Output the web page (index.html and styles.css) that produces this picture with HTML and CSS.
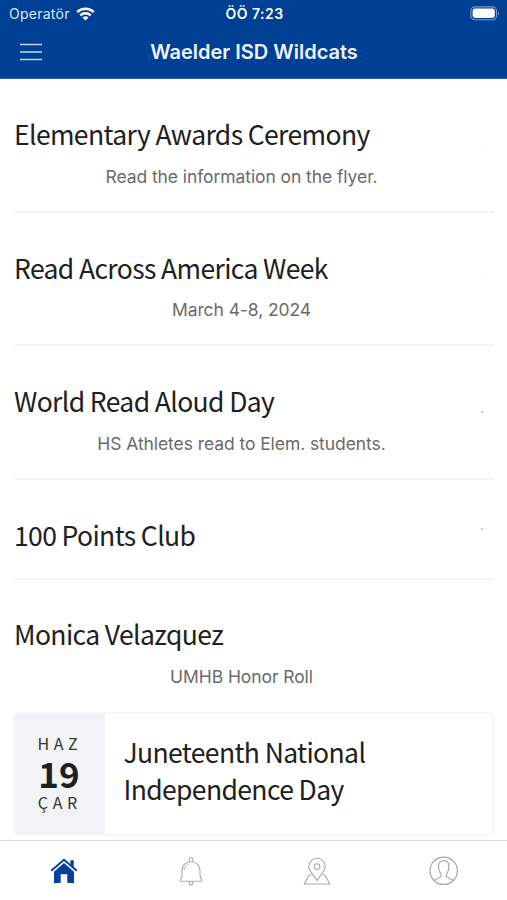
FILE: index.html
```html
<!DOCTYPE html>
<html lang="tr">
<head>
<meta charset="utf-8">
<title>Waelder ISD Wildcats</title>
<link rel="stylesheet" href="styles.css">
</head>
<body>
<div class="app">
  <header class="header">
    <div class="status">
      <div class="carrier"><span>Operatör</span>
        <svg class="wifi" viewBox="0 0 19 14" width="19" height="14"><g fill="none" stroke="#fff" stroke-width="2.5"><path d="M1.2 5.1a11.8 11.8 0 0 1 16.6 0"/><path d="M4.3 8.4a7.4 7.4 0 0 1 10.4 0"/></g><path d="M6.5 10.6a4.3 4.3 0 0 1 6 0L9.5 13.6z" fill="#fff"/></svg>
      </div>
      <span class="clock">ÖÖ 7:23</span>
      <svg class="battery" viewBox="0 0 31 15" width="31" height="15"><rect x=".9" y=".9" width="25.6" height="12.8" rx="4" fill="none" stroke="#7b9dcc" stroke-width="1.1"/><rect x="2.6" y="2.6" width="22.2" height="9.4" rx="2.4" fill="#fff"/><path d="M28 5.2q2.2 2.1 0 4.2z" fill="#7b9dcc"/></svg>
    </div>
    <div class="nav">
      <svg class="menu" viewBox="0 0 22 18" width="22" height="18"><path d="M0 1.5h22M0 9h22M0 16.5h22" stroke="#c2d3ea" stroke-width="1.5"/></svg>
      <h1>Waelder ISD Wildcats</h1>
    </div>
  </header>
  <main class="feed">
    <article class="item"><h2>Elementary Awards Ceremony</h2><i class="dot pale"></i><p>Read the information on the flyer.</p></article>
    <article class="item"><h2>Read Across America Week</h2><i class="dot pale"></i><p>March 4-8, 2024</p></article>
    <article class="item"><h2>World Read Aloud Day</h2><i class="dot"></i><p>HS Athletes read to Elem. students.</p></article>
    <article class="item short"><h2>100 Points Club</h2><i class="dot high"></i></article>
    <article class="item last"><h2>Monica Velazquez</h2><p>UMHB Honor Roll</p></article>
    <article class="event">
      <div class="date"><span>HAZ</span><b>19</b><span>ÇAR</span></div>
      <h2>Juneteenth National<br>Independence Day</h2>
    </article>
  </main>
  <nav class="tabs">
    <a><svg viewBox="0 0 30 30" width="30" height="30"><path d="M2.2 14.7 15 3.7l12.8 11" fill="none" stroke="#06409a" stroke-width="1.9"/><path d="M21.4 4.2h3.3v7l-3.3-2.8zM5 15.7 15 7.1l10 8.6v11.4h-6.7v-8.8h-6.6v8.8H5z" fill="#06409a"/></svg></a>
    <a><svg viewBox="0 0 30 30" width="30" height="30"><g fill="none" stroke="#aaa" stroke-width="1.1"><path d="M4.6 25.2h20.8c.5 0 .6-1.4.1-1.9-1.3-1.1-1.5-2.6-1.5-4.7v-3.6c0-5.8-3.8-9.2-9-9.2s-9 3.4-9 9.2v3.6c0 2.1-.2 3.6-1.5 4.7-.5.5-.4 1.9.1 1.9z"/><path d="M13.3 5.8V3.2a1.7 1.7 0 0 1 3.4 0v2.6M13.3 25.2v2a1.7 1.7 0 0 0 3.4 0v-2"/><path d="M8.2 13.8c.2-2.8 1.8-4.9 4.2-5.5" stroke-dasharray="2 1"/></g></svg></a>
    <a><svg viewBox="0 0 30 30" width="30" height="30"><g fill="none" stroke="#aaa" stroke-width="1.1"><path d="M15 24.4c-2.5-4.3-8.2-8.8-8.2-14a8.2 8.2 0 0 1 16.4 0c0 5.2-5.7 9.7-8.2 14z"/><circle cx="15" cy="10.6" r="2.9"/><path d="M9.2 18.5 6.8 19.4 2.3 28h25.4l-4.5-8.6-2.4-.9"/></g></svg></a>
    <a><svg viewBox="0 0 30 30" width="30" height="30"><g fill="none" stroke="#a6a6a6" stroke-width="1.2"><circle cx="14.7" cy="14.8" r="13.7"/><path d="M5.2 24.7c1-2.2 6.9-2.5 7-4.8.1-2.2-2.7-3.7-2.7-9.2 0-4 1.9-6 5.2-6s5.2 2 5.2 6c0 5.5-2.8 7-2.7 9.2.1 2.3 6 2.6 7 4.8"/></g></svg></a>
  </nav>
</div>
</body>
</html>
```

FILE: styles.css
```css
* { box-sizing: border-box; margin: 0; padding: 0; }
body { background: #fff; font-family: Inter, sans-serif; }
svg { display: block; }
.app { width: 507px; height: 900px; display: flex; flex-direction: column; overflow: hidden; }
.header { height: 79px; flex: none; background: #004094; color: #fff; border-bottom: 1px solid #2f64ab; }
.status { height: 27px; display: grid; grid-template-columns: 1fr auto 1fr; align-items: center; padding: 0 6px 0 9px; }
.carrier { display: flex; align-items: center; gap: 6px; font-size: 14px; letter-spacing: .25px; color: #dbe6f5; }
.clock { font-size: 14px; font-weight: 600; letter-spacing: .5px; margin-left: -1px; }
.battery { justify-self: end; }
.nav { height: 50px; display: grid; grid-template-columns: 60px 1fr 60px; align-items: center; }
.menu { margin-left: 20px; }
h1 { text-align: center; font-size: 20px; line-height: 26px; font-weight: 600; color: #eef4ff; padding-left: 1px; }
.feed { flex: 1; min-height: 0; overflow: hidden; padding: 0 13px; }
h2 { font: 400 26.5px/38px "Noto Sans CJK JP", sans-serif; letter-spacing: -.62px; color: #202020; white-space: nowrap; }
.item { height: 133.5px; border-bottom: 2px solid #f4f4f4; display: grid; grid-template-columns: 1fr 13px; grid-template-rows: 38px 26px; row-gap: 10.5px; padding: 36px 0 0 1px; }
.item h2 { width: max-content; }
.item p { grid-column: 1 / 3; text-align: center; padding-right: 25px; font-size: 17.5px; line-height: 26px; letter-spacing: -.08px; color: #6a6a6a; }
.short { height: 100px; }
.last { border: 0; height: 132px; padding-top: 35.5px; }
.dot { width: 2px; height: 2px; margin-top: 29px; background: #ccc; }
.pale { background: #f8f8f8; }
.high { margin-top: 12px; }
.event { height: 124px; display: flex; border: 2px solid #f5f7f8; border-radius: 5px; overflow: hidden; }
.date { width: 90px; background: #f1f3f7; display: flex; flex-direction: column; align-items: center; padding: 19px 3px 0 0; font-family: "Noto Sans CJK JP", sans-serif; color: #202020; }
.date span { font-size: 16px; line-height: 20px; letter-spacing: 4.6px; margin: 0 -3.6px 0 -1px; color: #333; }
.date b { font-size: 35px; line-height: 39px; margin-left: 1px; }
.event h2 { padding: 19px 0 0 18.5px; line-height: 37px; }
.tabs { height: 60px; flex: none; border-top: 1px solid #dedede; display: grid; grid-template-columns: repeat(4, 126.5px); justify-items: center; align-items: center; padding-left: 1px; background: #fff; }
```
